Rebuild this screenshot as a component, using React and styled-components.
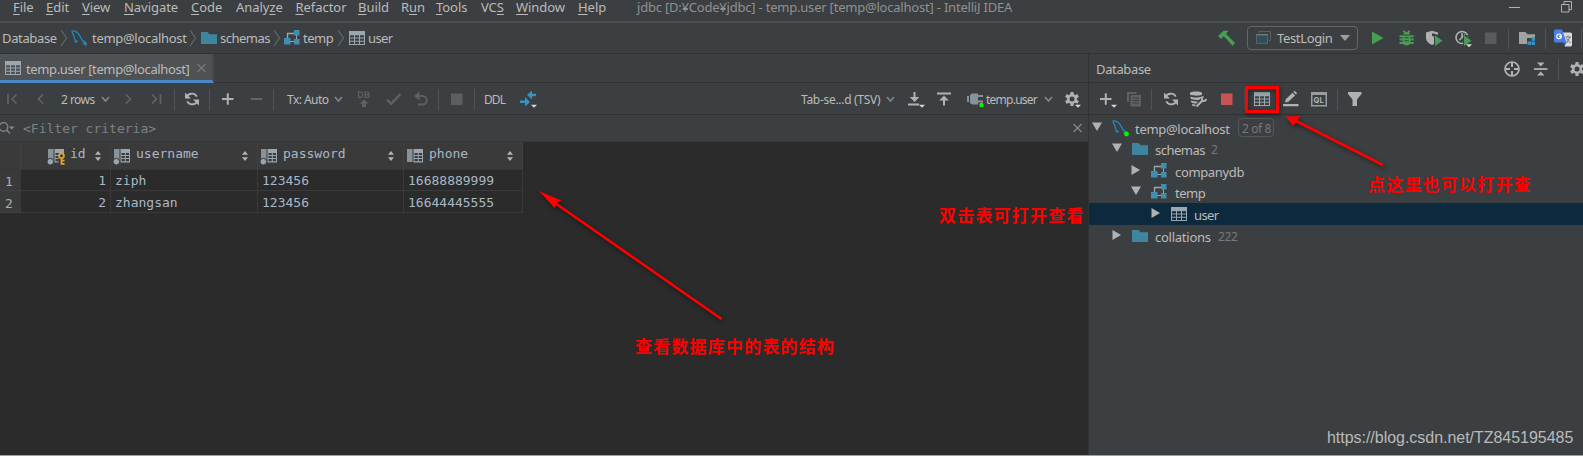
import React from 'react';
import styled, { createGlobalStyle } from 'styled-components';

const GlobalStyle = createGlobalStyle`
  body {
    margin: 0;
    overflow: hidden;
    background: #2b2b2b;
  }
  * {
    box-sizing: border-box;
  }
`;

const Window = styled.div`
  position: relative;
  width: 1583px;
  height: 456px;
  overflow: hidden;
  display: flex;
  flex-direction: column;
  background: #3c3f41;
  color: #bbbbbb;
  font-family: 'Noto Sans', 'Noto Sans CJK SC', sans-serif;
  font-size: 13px;
  border-bottom: 1px solid #a0a0a0;
`;

const MenuBar = styled.div`
  display: flex;
  height: 23px;
  flex-shrink: 0;
  border-bottom: 2px solid #4b4d4f;
`;

const NavBar = styled.div`
  display: flex;
  align-items: center;
  height: 31px;
  flex-shrink: 0;
  border-bottom: 1px solid #323232;
`;

const Body = styled.div`
  display: flex;
  flex: 1;
  min-height: 0;
`;

const Editor = styled.div`
  display: flex;
  flex-direction: column;
  width: 1088px;
  overflow: hidden;
  background: #2b2b2b;
`;

const SidePanel = styled.div`
  display: flex;
  flex-direction: column;
  width: 495px;
  overflow: hidden;
  border-left: 1px solid #323232;
`;

const Strip = styled.div`
  display: flex;
  height: 29px;
  flex-shrink: 0;
  background: #3c3f41;
  border-bottom: 1px solid #323232;
`;

const PanelHeader = styled(Strip)`
  align-items: center;
  padding-top: 2px;
`;

const Tab = styled.div`
  display: flex;
  align-items: center;
  width: 214px;
  height: 29px;
  padding-top: 2px;
  background: #4e5254;
  border-right: 2px solid #45494b;
  border-bottom: 3px solid #4a88c7;
`;

const Toolbar = styled.div`
  display: flex;
  align-items: center;
  height: 32px;
  padding-top: 1px;
  flex-shrink: 0;
  background: #3c3f41;
  border-bottom: 1px solid #323232;
`;

const Label = styled.span`
  flex-shrink: 0;
  width: ${({ $w }) => $w}px;
  margin-left: ${({ $ml }) => $ml || 0}px;
  font-size: ${({ $size }) => $size || 13}px;
  letter-spacing: ${({ $ls }) => $ls ?? -0.35}px;
  color: ${({ $color }) => $color || 'inherit'};
  line-height: 16px;
  white-space: pre;
`;

const MenuLabel = styled(Label)`
  margin-top: -1px;

  u {
    text-decoration-thickness: 1px;
    text-underline-offset: 2px;
  }
`;

/* smaller, tighter text of the toolbars */
const ToolLabel = styled(Label)`
  margin-top: 2px;
  font-size: 12px;
  letter-spacing: ${({ $ls }) => $ls ?? -0.55}px;
`;

const TabLabel = styled(Label)`
  margin-top: 1px;
`;

const Divider = styled.span`
  flex-shrink: 0;
  width: 1px;
  height: 21px;
  margin-left: ${({ $ml }) => $ml}px;
  background: #515355;
`;

const Svg = styled.svg`
  display: block;
  flex-shrink: 0;
  overflow: visible;
  margin-left: ${({ $ml }) => $ml || 0}px;
`;

const RunConfig = styled.div`
  display: flex;
  align-items: center;
  width: 111px;
  height: 24px;
  margin-left: 12px;
  border: 1px solid #646668;
  border-radius: 4px;
`;

const FilterBar = styled.div`
  display: flex;
  align-items: center;
  height: 27px;
  flex-shrink: 0;
  background: #3c3f41;
  border-bottom: 1px solid #353739;
  font-family: 'DejaVu Sans Mono', monospace;
`;

const FilterLabel = styled(Label)`
  margin-top: 2px;
`;

const Grid = styled.div`
  display: grid;
  grid-template-columns: 21px 90px 147px 146px 119px;
  grid-template-rows: 28px 21px 22px;
  width: 523px;
  font-family: 'DejaVu Sans Mono', monospace;
`;

const HeadCell = styled.div`
  display: flex;
  align-items: flex-start;
  padding: 6px 9px 0 ${({ $pl }) => $pl || 3}px;
  background: #3a3a3a;
  border-right: 1px solid #414141;
  border-bottom: 1px solid #353535;
`;

const HeadName = styled.span`
  flex: 1;
  margin: -1px 0 0 5px;
  line-height: 13px;
  color: #a9b7c6;
  font-size: 13px;
`;

const Cell = styled.div`
  padding: 0 4px;
  line-height: ${({ $lh }) => $lh}px;
  text-align: ${({ $right }) => ($right ? 'right' : 'left')};
  color: #a9b7c6;
  border-right: 1px solid #3a3a3a;
  border-bottom: 1px solid #3a3a3a;
`;

const RowNumber = styled.div`
  padding-left: 5px;
  line-height: ${({ $lh }) => $lh}px;
  color: #a9b0b5;
  background: #3a3a3a;
  border-bottom: 1px solid #414141;
`;

const Tree = styled.div`
  display: flex;
  flex-direction: column;
  padding-top: 2px;
`;

const TreeRow = styled.div`
  display: flex;
  align-items: center;
  height: ${({ $h }) => $h}px;
  padding-left: ${({ $indent }) => $indent}px;
  background: ${({ $selected }) => ($selected ? '#0d293e' : 'transparent')};
`;

const TreeText = styled(Label)`
  margin-top: 2px;
`;

const Badge = styled.span`
  width: 36px;
  height: 19px;
  margin-left: 7px;
  border: 1px solid #55585a;
  border-radius: 4px;
  line-height: 19px;
  padding-left: 3px;
  color: #787878;
  font-size: 12px;
  letter-spacing: -0.4px;
  white-space: nowrap;
`;

/* hand-drawn notes that lie over the window */
const Overlay = styled.svg`
  position: absolute;
  inset: 0;
  filter: drop-shadow(1px 2px 2px rgba(0, 0, 0, 0.5));
`;

const Note = styled.div`
  position: absolute;
  left: ${({ $x }) => $x}px;
  top: ${({ $y }) => $y}px;
  font: 700 17px/22px 'Noto Sans CJK SC', sans-serif;
  letter-spacing: 1.2px;
  color: #ff0000;
  white-space: nowrap;
`;

const Watermark = styled.div`
  position: absolute;
  left: 1327px;
  top: 428px;
  font: 16px/20px 'Liberation Sans', sans-serif;
  letter-spacing: -0.03px;
  color: #b9babb;
  white-space: nowrap;
`;

const Icon = ({ ml, w = 16, children, ...rest }) => (
  <Svg $ml={ml} width={w} height="16" viewBox={`0 0 ${w} 16`} fill="none" {...rest}>
    {children}
  </Svg>
);

const Crumb = ({ ml }) => (
  <Icon ml={ml} w={8} stroke="#65686a" strokeWidth="1.2">
    <path d="M1 0 L6.5 8 L1 16" />
  </Icon>
);

const Chevron = ({ ml }) => (
  <Icon ml={ml} w={9} stroke="#84888b" strokeWidth="1.6">
    <path d="M1 6 L4.5 10 L8 6" />
  </Icon>
);

const TableIcon = ({ ml }) => (
  <Icon ml={ml}>
    <path fill="#9aa7b0" d="M0 1h16v3.5H0z" />
    <path
      fill="#9aa7b0"
      fillRule="evenodd"
      d="M0 4h16v11H0z M1 5.2v2.2h4V5.2z M6 5.2v2.2h4V5.2z M11 5.2v2.2h4V5.2z M1 8.5v2.2h4V8.5z M6 8.5v2.2h4V8.5z M11 8.5v2.2h4V8.5z M1 11.8V14h4v-2.2z M6 11.8V14h4v-2.2z M11 11.8V14h4v-2.2z"
    />
  </Icon>
);

const FolderIcon = ({ ml }) => (
  <Icon ml={ml}>
    <path fill="#3e86a0" d="M0 2h6.5l2 2.2H16V14H0z" />
  </Icon>
);

const SchemaIcon = ({ ml }) => (
  <Icon ml={ml}>
    <path stroke="#9aa7b0" strokeWidth="1.3" d="M3.5 8V3.5H10" />
    <path stroke="#9aa7b0" strokeWidth="1" d="M12.5 5v5M6 11.5h5" />
    <path fill="#3e8fb0" d="M10 0h5.5v5.5H10zM10 9h5.5v5.5H10zM0 8h6.5v6.5H0z" />
  </Icon>
);

const MysqlIcon = ({ ml, online }) => (
  <Icon ml={ml} w={17}>
    <path
      stroke="#2389c2"
      strokeWidth="1.3"
      d="M5 12.5 C3.4 9.5 3.6 7.8 2.8 5.6 C2 3.6 .8 2.5 1 1.2 C2.8 .6 5 1.4 6.7 3 C9 5.2 9.8 8.4 11.7 10.6 C13 11.6 14.5 12 15.3 13.6 L12.6 13.4 L15.5 15.8 M5 12.5 L6.6 10.5"
    />
    {online && <circle cx="14.5" cy="14" r="2.4" fill="#00f800" />}
  </Icon>
);

const RefreshIcon = ({ ml }) => (
  <Icon ml={ml} stroke="#afb1b3" strokeWidth="1.9">
    <path d="M2.4 7 A5.6 5.6 0 0 1 12.8 5.6 M13.6 9 A5.6 5.6 0 0 1 3.2 10.4" />
    <path fill="#afb1b3" stroke="none" d="M1 1.5v6h6zM15 14.5v-6H9z" />
  </Icon>
);

const Corner = () => <path fill="#d8d8d8" stroke="none" d="M11 13.8h6l-3 3z" />;

const GearIcon = ({ ml, menu }) => (
  <Icon ml={ml}>
    <g stroke="#afb1b3" strokeWidth="3.2">
      <path d="M8 1v14M1.9 4.5l12.2 7M1.9 11.5l12.2-7" />
    </g>
    <circle cx="8" cy="8" r="3.8" fill="#3c3f41" stroke="#afb1b3" strokeWidth="2.6" />
    {menu && <path fill="#3c3f41" d="M10 12.5h7v4h-7z" />}
    {menu && <Corner />}
  </Icon>
);

const Arrow = ({ open }) => (
  <Icon w={10}>
    <path fill="#afb1b3" d={open ? 'M0 2.5h10L5 11z' : 'M.5 2v10l8.5-5z'} />
  </Icon>
);

const ColumnIcon = ({ indexed, primary }) => (
  <Icon w={17}>
    <path fill="#87939a" d="M0 1h5.5v13H0z" />
    <path
      fill="#9aa7b0"
      fillRule="evenodd"
      d="M6.5 1H16v13.5H6.5z M7.5 5v2h3.3V5z M11.8 5v2H15V5z M7.5 8v2h3.3V8z M11.8 8v2H15V8z M7.5 11v2.3h3.3V11z M11.8 11v2.3H15V11z"
    />
    {indexed && <circle cx="2.3" cy="13.7" r="3.3" fill="#9aa7b0" stroke="#3a3a3a" />}
    {primary && (
      <g>
        <path fill="#3a3a3a" d="M10.5 5h7v12h-7z" />
        <circle cx="13.5" cy="7.8" r="2.4" stroke="#e5a330" strokeWidth="1.8" />
        <path stroke="#e5a330" strokeWidth="1.8" d="M13.5 10v6.7M13.5 12.6h3M13.5 15.8h3" />
      </g>
    )}
  </Icon>
);

const SortIcon = () => (
  <Icon w={6}>
    <path fill="#b4b4b4" d="M0 6.8h6L3 3zM0 9.2h6L3 13z" />
  </Icon>
);

const menus = [
  ['', 'F', 'ile', 13, 33],
  ['', 'E', 'dit', 0, 36],
  ['', 'V', 'iew', 0, 42],
  ['', 'N', 'avigate', 0, 67],
  ['', 'C', 'ode', 0, 45],
  ['Analy', 'z', 'e', 0, 59.5],
  ['', 'R', 'efactor', 0, 62.5],
  ['', 'B', 'uild', 0, 43],
  ['R', 'u', 'n', 0, 35],
  ['', 'T', 'ools', 0, 45],
  ['VC', 'S', '', 0, 35],
  ['', 'W', 'indow', 0, 62],
  ['', 'H', 'elp', 0, 59],
];

const rows = [
  { id: 1, username: 'ziph', password: '123456', phone: '16688889999' },
  { id: 2, username: 'zhangsan', password: '123456', phone: '16644445555' },
];

const TopMenu = () => (
  <MenuBar>
    {menus.map(([before, key, after, ml, w]) => (
      <MenuLabel key={before + key + after} $ml={ml} $w={w} $ls={-0.05}>
        {before}
        <u>{key}</u>
        {after}
      </MenuLabel>
    ))}
    <MenuLabel $w={872} $ls={-0.21} $color="#8f9192">
      jdbc [D:¥Code¥jdbc] - temp.user [temp@localhost] - IntelliJ IDEA
    </MenuLabel>
    <Icon w={12} stroke="#afb1b3">
      <path d="M0 7.5h11" />
    </Icon>
    <Icon ml={40} w={12} stroke="#afb1b3">
      <path d="M.5 4.5h7.5v7.5H.5zM3 4V1.5h7.5v8H8" />
    </Icon>
  </MenuBar>
);

const Navigation = () => (
  <NavBar>
    <Label $ml={2} $w={58}>Database</Label>
    <Crumb />
    <MysqlIcon ml={3} />
    <Label $ml={4} $w={97} $ls={-0.3}>temp@localhost</Label>
    <Crumb />
    <FolderIcon ml={4} />
    <Label $ml={3} $w={53} $ls={-0.5}>schemas</Label>
    <Crumb />
    <SchemaIcon ml={3} />
    <Label $ml={3} $w={34} $ls={-0.5}>temp</Label>
    <Crumb />
    <TableIcon ml={4} />
    <Label $ml={3} $w={850} $ls={-0.6}>user</Label>

    <Icon w={17}>
      <path fill="#499c54" d="M0 6 L5.5 .8 L10.5 .8 L8 3.8 L17 13 L14.5 15.8 L5.8 6.2 L3 9z" />
    </Icon>
    <RunConfig>
      <Icon ml={7}>
        <path stroke="#5c6164" d="M4 3.5V1.5h11.5v9H14" />
        <path fill="#6e7477" d="M1 4h12v2H1z" />
        <path stroke="#5c6164" fill="#2f4f5a" d="M1.5 5.5h11v8h-11z" />
      </Icon>
      <Label $ml={6} $w={63}>TestLogin</Label>
      <Icon w={10}>
        <path fill="#9c9ea0" d="M0 5h10l-5 6z" />
      </Icon>
    </RunConfig>
    <Icon ml={14} w={12}>
      <path fill="#499c54" d="M0 1.5v13L11.5 8z" />
    </Icon>
    <Icon ml={15}>
      <path fill="#499c54" d="M4.2 4.5C4.2 2.8 6 2 7.6 2s3.4.8 3.4 2.500zM3.500 5.500h8.200v7c0 1.600-2 3-4.100 3s-4.100-1.400-4.100-3z" />
      <path stroke="#499c54" strokeWidth="1.9" d="M4.500.8l2 2M10.700.8l-2 2M.5 6.200h3.500M.5 9.500h3M.5 13h3.500M11.200 6.200h3.500M11.700 9.500h3M11.200 13h3.500" />
      <path stroke="#3c3f41" strokeWidth="1.1" d="M5.500 7.800h4.200M5.500 10.800h4.200" />
    </Icon>
    <Icon ml={11}>
      <path fill="#afb1b3" d="M0 2.500L6 .8l6 1.700V8c0 3-3 6-6 7C2.500 13.500 0 11 0 8z" />
      <path fill="#3c3f41" d="M6 3.200l3.800.8v3L6 6z M8 4.500h6V16H8z" />
      <path fill="#499c54" d="M9 5.500v10.500l7.500-5.200z" />
    </Icon>
    <Icon ml={13}>
      <circle cx="7" cy="7.500" r="6" stroke="#afb1b3" strokeWidth="1.600" />
      <path stroke="#afb1b3" strokeWidth="1.500" d="M7 3v4.500L4.500 10M10 4.500l-3 3" />
      <path fill="#3c3f41" d="M8 5h7v12H8z" opacity=".8" />
      <path fill="#499c54" d="M9 5.500v10.500l7.500-5.200z" />
      <path fill="#d8d8d8" d="M11 14.300h6l-3 3z" />
    </Icon>
    <Icon ml={14} w={12}>
      <path fill="#5b5b5b" d="M0 2.500h11.500V14H0z" />
    </Icon>
    <Divider $ml={11} />
    <Icon ml={10}>
      <path fill="#9fa1a3" d="M0 2h6.500l2 2.200H16V8H8v6H0z" />
      <path fill="#3592c4" d="M12.500 7.500H16v3.300h-3.500zM8.500 11.500H12v3.500H8.500zM12.500 11.500H16v3.500h-3.500z" />
    </Icon>
    <Divider $ml={10} />
    <Icon ml={8} w={18}>
      <path fill="#dadada" d="M7 2.500h9.500q1.500 0 1.500 1.500v11q0 1.500-1.500 1.500H11z" />
      <path fill="#4a7fe8" d="M1.500 -.5H8l4.500 13H1.500Q0 12.500 0 11V1Q0-.5 1.500-.5z" />
      <circle cx="5" cy="6.300" r="2.300" stroke="#fff" strokeWidth="1.200" />
      <path stroke="#fff" strokeWidth="1.200" d="M5 6.300h2.600" />
      <path stroke="#777" d="M11.500 7h5.500M14 5.500V7M16 7l-3.500 6M12.500 8.500l4 4.500" />
      <path fill="#2f55b5" d="M8.500 12.500h4l-2 3.500z" />
    </Icon>
    <Divider $ml={9} />
  </NavBar>
);

const ResultToolbar = () => (
  <Toolbar>
    <Icon ml={7} w={11} stroke="#616365" strokeWidth="1.700">
      <path d="M1 3v10M9.500 3.500L5 8l4.500 4.500" />
    </Icon>
    <Icon ml={19} w={7} stroke="#616365" strokeWidth="1.700">
      <path d="M6 3.500L1.500 8L6 12.500" />
    </Icon>
    <ToolLabel $ml={17} $w={39}>2 rows</ToolLabel>
    <Chevron ml={1} />
    <Icon ml={15} w={7} stroke="#616365" strokeWidth="1.700">
      <path d="M1 3.500L5.500 8L1 12.500" />
    </Icon>
    <Icon ml={19} w={11} stroke="#616365" strokeWidth="1.700">
      <path d="M1 3.500L5.500 8L1 12.500M9.500 3v10" />
    </Icon>
    <Divider $ml={12} />
    <RefreshIcon ml={9} />
    <Divider $ml={9} />
    <Icon ml={12} w={12} stroke="#afb1b3" strokeWidth="2">
      <path d="M0 8h11.500M5.800 2.200v11.500" />
    </Icon>
    <Icon ml={17} w={12} stroke="#616365" strokeWidth="2">
      <path d="M0 8h11" />
    </Icon>
    <Divider $ml={10} />
    <ToolLabel $ml={13} $w={46}>Tx: Auto</ToolLabel>
    <Chevron ml={1} />
    <Icon ml={15} w={12} stroke="#5e6062" strokeWidth="1.200">
      <path d="M.6 1v5.400h1.600c3.200 0 3.200-5.400 0-5.400zM7 1v5.400h2.400c2.600 0 2.600-2.800 0-2.800H7h2.200c2 0 2-2.600 0-2.600z" />
      <path fill="#5e6062" stroke="none" d="M6 8.500L1.500 12.500H4V16h4v-3.500h2.500z" />
    </Icon>
    <Icon ml={16} stroke="#5e6062" strokeWidth="2.400">
      <path d="M1 8.500l4.200 4.200L14.500 3" />
    </Icon>
    <Icon ml={12} w={14} stroke="#5e6062" strokeWidth="2">
      <path d="M2 5h6.500a4 4 0 0 1 0 8.500H4" />
      <path fill="#5e6062" stroke="none" d="M0 5l5.500-4.500v9z" />
    </Icon>
    <Divider $ml={10} />
    <Icon ml={12} w={12}>
      <path fill="#5e5e5e" d="M0 2.500h11.500V14H0z" />
    </Icon>
    <Divider $ml={11} />
    <ToolLabel $ml={9} $w={36} $ls={-0.9}>DDL</ToolLabel>
    <Icon w={17}>
      <path fill="#3592c4" d="M0 10h5V6.500L10 11.500 5 16.200V12.500H0z M16 3.200h-4V0L7 4.500 12 9V5.700h4z" transform="translate(0 -.5)" />
      <Corner />
    </Icon>
    <ToolLabel $ml={264} $w={84} $ls={-0.3}>Tab-se...d (TSV)</ToolLabel>
    <Chevron ml={1} />
    <Icon ml={13} stroke="#afb1b3" strokeWidth="2">
      <path d="M0 13.500h11M6.500 1v6" />
      <path fill="#afb1b3" stroke="none" d="M1.800 6h9.500l-4.700 5z" />
      <Corner />
    </Icon>
    <Icon ml={13} w={14} stroke="#afb1b3" strokeWidth="2">
      <path d="M0 2.500h14M7 8v6.500" />
      <path fill="#afb1b3" stroke="none" d="M2.200 9.500h9.600L7 4.500z" />
    </Icon>
    <Icon ml={16} w={17}>
      <path fill="#87939a" d="M0 5h2v6H0zM3 4l2-1.500h6v11H5L3 12z" />
      <path stroke="#87939a" strokeWidth="2" d="M11 5h5M11 10.500h5" />
      <circle cx="14.500" cy="14" r="2.200" fill="#00f800" />
    </Icon>
    <ToolLabel $ml={2} $w={57} $ls={-0.75}>temp.user</ToolLabel>
    <Chevron ml={1} />
    <GearIcon ml={11} menu />
  </Toolbar>
);

const PanelToolbar = () => (
  <Toolbar>
    <Icon ml={11} stroke="#afb1b3" strokeWidth="2">
      <path d="M0 8h11.500M5.800 2.200v11.500" />
      <Corner />
    </Icon>
    <Icon ml={11} w={14}>
      <path stroke="#5e6062" strokeWidth="2" d="M1 11V2h8.500" />
      <path fill="#5e6062" fillRule="evenodd" d="M3.500 4H14v11.500H3.500zM5.500 6.500v1H12v-1zM5.500 9v1H12V9zM5.500 11.500v1H12v-1z" />
    </Icon>
    <Divider $ml={10} />
    <RefreshIcon ml={11} />
    <Icon ml={11} w={17}>
      <path fill="#afb1b3" d="M0 2c0-2 12-2 12 0v1.500c0 1.500-12 1.500-12 0zM.5 5.500c3 1.300 8 1.300 11.500 0v1L9 9C6 9 2 9 .5 7.500zM1 9.500c2 .8 5 1 7 1l-1.500 2C4 12.500 2 12 1 11zM2 13l4 .8L5 15.500C4 15.300 2.500 15 2 14z" />
      <path stroke="#afb1b3" strokeWidth="2.200" d="M6.500 15.500l6-6" />
      <path stroke="#afb1b3" strokeWidth="1.800" d="M13.500 5.500c-2.500 1-2 4.500.5 4.500 1 0 2-1 2.200-2.200" />
    </Icon>
    <Icon ml={14} w={12}>
      <path fill="#c75450" d="M0 2.500h11.500V14H0z" />
    </Icon>
    <Divider $ml={11} />
    <TableIcon ml={9} />
    <Icon ml={13}>
      <path fill="#afb1b3" d="M0 13h15.500v2.200H0zM2 11.500l.8-3.300 6.700-6.400 2.600 2.600-6.700 6.400zM10.300 1L11.700-.3l2.500 2.600L12.900 3.600z" />
    </Icon>
    <Icon ml={12}>
      <path fill="#9a9c9e" fillRule="evenodd" d="M0 1h16v14.500H0zM1.500 4v10h13V4z" />
      <text x="2.600" y="12.200" fill="#afb1b3" fontSize="7.500" fontWeight="700" fontFamily="Inter, sans-serif">QL</text>
    </Icon>
    <Divider $ml={10} />
    <Icon ml={10} w={14}>
      <path fill="#afb1b3" d="M0 1h13.500v2L9 8.500V15H4.500V8.500L0 3z" />
    </Icon>
  </Toolbar>
);

const DatabaseTree = () => (
  <Tree>
    <TreeRow $h={21} $indent={3}>
      <Arrow open />
      <MysqlIcon ml={10} online />
      <TreeText $ml={6} $w={96} $ls={-0.3}>temp@localhost</TreeText>
      <Badge>2 of 8</Badge>
    </TreeRow>
    <TreeRow $h={22} $indent={23}>
      <Arrow open />
      <FolderIcon ml={10} />
      <TreeText $ml={7} $w={56} $ls={-0.5}>schemas</TreeText>
      <TreeText $w={20} $size={12} $color="#787878">2</TreeText>
    </TreeRow>
    <TreeRow $h={21} $indent={42}>
      <Arrow />
      <SchemaIcon ml={10} />
      <TreeText $ml={8} $w={80}>companydb</TreeText>
    </TreeRow>
    <TreeRow $h={22} $indent={42}>
      <Arrow open />
      <SchemaIcon ml={10} />
      <TreeText $ml={8} $w={40} $ls={-0.5}>temp</TreeText>
    </TreeRow>
    <TreeRow $h={22} $indent={62} $selected>
      <Arrow />
      <TableIcon ml={10} />
      <TreeText $ml={7} $w={40} $ls={-0.6}>user</TreeText>
    </TreeRow>
    <TreeRow $h={22} $indent={23}>
      <Arrow />
      <FolderIcon ml={10} />
      <TreeText $ml={7} $w={63} $ls={-0.25}>collations</TreeText>
      <TreeText $w={30} $size={12} $color="#787878">222</TreeText>
    </TreeRow>
  </Tree>
);

const App = () => (
  <>
    <GlobalStyle />
    <Window>
      <TopMenu />
      <Navigation />
      <Body>
        <Editor>
          <Strip>
            <Tab>
              <TableIcon ml={5} />
              <TabLabel $ml={5} $w={171} $ls={-0.38}>temp.user [temp@localhost]</TabLabel>
              <Icon w={9} stroke="#77797b" strokeWidth="1.200">
                <path d="M.5 4l8 8M8.500 4l-8 8" />
              </Icon>
            </Tab>
          </Strip>
          <ResultToolbar />
          <FilterBar>
            <Icon ml={-1} w={16} stroke="#87898b" strokeWidth="1.300">
              <circle cx="4.500" cy="7" r="4.300" />
              <path d="M7.500 10l3.500 3.500" />
              <path fill="#87898b" stroke="none" d="M10 6.500h5.500l-2.700 3z" />
            </Icon>
            <FilterLabel $ml={8} $w={1050} $ls={0} $color="#808080">&lt;Filter criteria&gt;</FilterLabel>
            <Icon w={9} stroke="#87898b" strokeWidth="1.200">
              <path d="M.5 4l8 8M8.500 4l-8 8" />
            </Icon>
          </FilterBar>
          <Grid>
            <HeadCell />
            <HeadCell $pl={27}>
              <ColumnIcon indexed primary />
              <HeadName>id</HeadName>
              <SortIcon />
            </HeadCell>
            {['username', 'password', 'phone'].map((name) => (
              <HeadCell key={name}>
                <ColumnIcon indexed={name !== 'phone'} />
                <HeadName>{name}</HeadName>
                <SortIcon />
              </HeadCell>
            ))}
            {rows.map((row, i) => (
              <React.Fragment key={row.id}>
                <RowNumber $lh={i ? 25 : 23}>{row.id}</RowNumber>
                <Cell $right $lh={i ? 24 : 22}>{row.id}</Cell>
                <Cell $lh={i ? 24 : 22}>{row.username}</Cell>
                <Cell $lh={i ? 24 : 22}>{row.password}</Cell>
                <Cell $lh={i ? 24 : 22}>{row.phone}</Cell>
              </React.Fragment>
            ))}
          </Grid>
        </Editor>
        <SidePanel>
          <PanelHeader>
            <Label $ml={7} $w={408}>Database</Label>
            <Icon stroke="#afb1b3" strokeWidth="1.700">
              <circle cx="8" cy="8" r="7" />
              <path strokeWidth="2" d="M8 1v5M8 10v5M1 8h5M10 8h5" />
            </Icon>
            <Icon ml={14} w={14}>
              <path stroke="#afb1b3" strokeWidth="1.800" d="M0 8h13.500" />
              <path fill="#afb1b3" d="M3 1.500h7.500L6.800 5.500zM3 14.500h7.500l-3.700-4z" />
            </Icon>
            <Divider $ml={10} />
            <GearIcon ml={10} />
          </PanelHeader>
          <PanelToolbar />
          <DatabaseTree />
        </SidePanel>
      </Body>

      <Overlay width="1583" height="456" fill="none">
        <path stroke="#ff0000" strokeWidth="3" d="M1246.500 87.500h31v24h-31z" />
        <path stroke="#ff0000" strokeWidth="2.600" d="M555 203L721.500 319M1296 121L1383 165" />
        <path fill="#ff0000" d="M539 191L561.500 200.500L556.500 203L555 208.500zM1286 116.500L1300 116L1297.500 121L1293 126z" />
      </Overlay>
      <Note $x={635} $y={335}>查看数据库中的表的结构</Note>
      <Note $x={939} $y={204}>双击表可打开查看</Note>
      <Note $x={1368} $y={173}>点这里也可以打开查</Note>
      <Watermark>https://blog.csdn.net/TZ845195485</Watermark>
    </Window>
  </>
);

export default App;
